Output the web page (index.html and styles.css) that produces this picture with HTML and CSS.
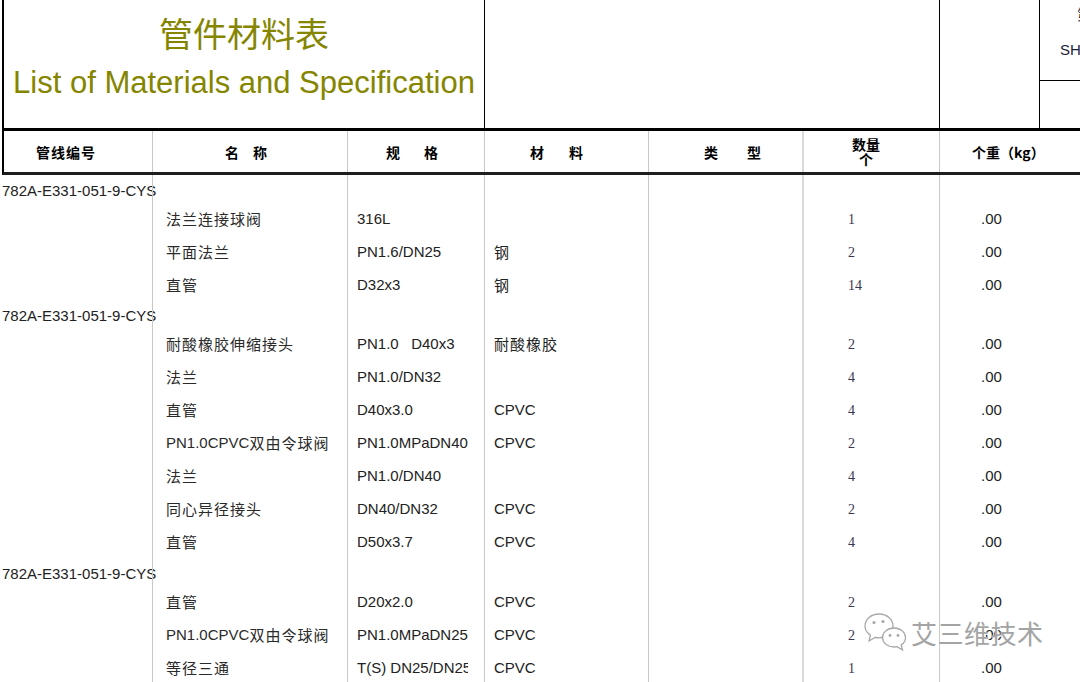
FILE: index.html
```html
<!DOCTYPE html>
<html lang="zh-CN">
<head>
<meta charset="utf-8">
<title>管件材料表</title>
<link rel="stylesheet" href="styles.css">
</head>
<body>
<div class="sheet">
  <div class="top">
    <div class="title-cell">
      <div class="title-cn">管件材料表</div>
      <div class="title-en">List of Materials and Specification</div>
    </div>
    <div class="top-cell"></div>
    <div class="top-cell"></div>
    <div class="top-cell top-right">
      <div class="tr-upper">
        <span class="tr-l1">第</span>
        <span class="tr-l2">SHEET</span>
      </div>
      <div class="tr-lower"></div>
    </div>
  </div>

  <div class="head">
    <div class="hc h1">管线编号</div>
    <div class="hc h2"><span>名</span><span>称</span></div>
    <div class="hc h3"><span>规</span><span>格</span></div>
    <div class="hc h4"><span>材</span><span>料</span></div>
    <div class="hc h5"><span>类</span><span>型</span></div>
    <div class="hc h6"><div class="stack"><span>数量</span><span>个</span></div></div>
    <div class="hc h7">个重（kg）</div>
  </div>

  <div class="rows">
    <div class="row group"><div class="c c1">782A-E331-051-9-CYS</div><div class="c"></div><div class="c"></div><div class="c"></div><div class="c"></div><div class="c c6"></div><div class="c"></div></div>
    <div class="row item"><div class="c c1"></div><div class="c c2">法兰连接球阀</div><div class="c c3">316L</div><div class="c c4"></div><div class="c"></div><div class="c c6">1</div><div class="c c7">.00</div></div>
    <div class="row item"><div class="c c1"></div><div class="c c2">平面法兰</div><div class="c c3">PN1.6/DN25</div><div class="c c4">钢</div><div class="c"></div><div class="c c6">2</div><div class="c c7">.00</div></div>
    <div class="row item"><div class="c c1"></div><div class="c c2">直管</div><div class="c c3">D32x3</div><div class="c c4">钢</div><div class="c"></div><div class="c c6">14</div><div class="c c7">.00</div></div>

    <div class="row group"><div class="c c1">782A-E331-051-9-CYS</div><div class="c"></div><div class="c"></div><div class="c"></div><div class="c"></div><div class="c c6"></div><div class="c"></div></div>
    <div class="row item"><div class="c c1"></div><div class="c c2">耐酸橡胶伸缩接头</div><div class="c c3 pre">PN1.0   D40x3</div><div class="c c4">耐酸橡胶</div><div class="c"></div><div class="c c6">2</div><div class="c c7">.00</div></div>
    <div class="row item"><div class="c c1"></div><div class="c c2">法兰</div><div class="c c3">PN1.0/DN32</div><div class="c c4"></div><div class="c"></div><div class="c c6">4</div><div class="c c7">.00</div></div>
    <div class="row item"><div class="c c1"></div><div class="c c2">直管</div><div class="c c3">D40x3.0</div><div class="c c4 lat">CPVC</div><div class="c"></div><div class="c c6">4</div><div class="c c7">.00</div></div>
    <div class="row item"><div class="c c1"></div><div class="c c2"><span class="lat">PN1.0CPVC</span>双由令球阀</div><div class="c c3">PN1.0MPaDN40</div><div class="c c4 lat">CPVC</div><div class="c"></div><div class="c c6">2</div><div class="c c7">.00</div></div>
    <div class="row item"><div class="c c1"></div><div class="c c2">法兰</div><div class="c c3">PN1.0/DN40</div><div class="c c4"></div><div class="c"></div><div class="c c6">4</div><div class="c c7">.00</div></div>
    <div class="row item"><div class="c c1"></div><div class="c c2">同心异径接头</div><div class="c c3">DN40/DN32</div><div class="c c4 lat">CPVC</div><div class="c"></div><div class="c c6">2</div><div class="c c7">.00</div></div>
    <div class="row item"><div class="c c1"></div><div class="c c2">直管</div><div class="c c3">D50x3.7</div><div class="c c4 lat">CPVC</div><div class="c"></div><div class="c c6">4</div><div class="c c7">.00</div></div>

    <div class="row group"><div class="c c1">782A-E331-051-9-CYS</div><div class="c"></div><div class="c"></div><div class="c"></div><div class="c"></div><div class="c c6"></div><div class="c"></div></div>
    <div class="row item"><div class="c c1"></div><div class="c c2">直管</div><div class="c c3">D20x2.0</div><div class="c c4 lat">CPVC</div><div class="c"></div><div class="c c6">2</div><div class="c c7">.00</div></div>
    <div class="row item"><div class="c c1"></div><div class="c c2"><span class="lat">PN1.0CPVC</span>双由令球阀</div><div class="c c3">PN1.0MPaDN25</div><div class="c c4 lat">CPVC</div><div class="c"></div><div class="c c6">2</div><div class="c c7">.00</div></div>
    <div class="row item"><div class="c c1"></div><div class="c c2">等径三通</div><div class="c c3"><span class="clip">T(S) DN25/DN25</span></div><div class="c c4 lat">CPVC</div><div class="c"></div><div class="c c6">1</div><div class="c c7">.00</div></div>
  </div>

  <div class="watermark">
    <svg class="wm-icon" width="46" height="42" viewBox="0 0 46 42">
      <path d="M16 2 C8 2 2 7.5 2 14 C2 17.8 4.2 21 7.5 23 L6 29 L12.5 25.3 C13.6 25.6 14.8 25.8 16 25.8 C24 25.8 30 20.5 30 14 C30 7.5 24 2 16 2 Z" fill="#fff" stroke="#a8a8a8" stroke-width="1.3"/>
      <circle cx="11" cy="10.5" r="1.6" fill="#a8a8a8"/>
      <circle cx="20" cy="9.5" r="1.6" fill="#a8a8a8"/>
      <path d="M31 16 C24.3 16 19.5 20.5 19.5 25.5 C19.5 30.5 24.3 35 31 35 C32 35 33 34.9 34 34.6 L39.5 37.8 L38.2 33 C40.9 31.2 42.5 28.5 42.5 25.5 C42.5 20.5 37.7 16 31 16 Z" fill="#fff" stroke="#a8a8a8" stroke-width="1.3"/>
      <circle cx="27" cy="23.5" r="1.4" fill="#a8a8a8"/>
      <circle cx="35" cy="23.5" r="1.4" fill="#a8a8a8"/>
    </svg>
    <span class="wm-text">艾三维技术</span>
  </div>
</div>
</body>
</html>
```

FILE: styles.css
```css
* {
  box-sizing: border-box;
  margin: 0;
  padding: 0;
}

html, body {
  background: #fff;
  overflow: hidden;
}

body {
  width: 1080px;
  height: 682px;
  font-family: "Liberation Sans", "Noto Sans CJK SC", sans-serif;
  font-size: 15px;
  color: #222;
}

.sheet {
  position: relative;
  width: 1080px;
  height: 682px;
  overflow: hidden;
  padding-left: 2px;
}

/* ---------- top title block ---------- */
.top {
  display: grid;
  grid-template-columns: 480px 455px 100px 100px;
  width: max-content;
  height: 128px;
  border-left: 2px solid #000;
}

.title-cell {
  display: flex;
  flex-direction: column;
  align-items: center;
  padding-top: 16px;
}

.title-cn {
  font-family: "Noto Sans CJK SC", sans-serif;
  font-size: 34px;
  line-height: 34px;
  color: #858500;
}

.title-en {
  font-family: "Liberation Sans", sans-serif;
  font-size: 31px;
  line-height: 31px;
  margin-top: 17px;
  color: #858500;
  white-space: nowrap;
}

.top-cell {
  border-left: 1px solid #000;
}

.top-right {
  display: grid;
  grid-template-rows: 81px 1fr;
}

.tr-upper {
  border-bottom: 1px solid #000;
  display: flex;
  flex-direction: column;
  padding-top: 6px;
  color: #1c1c3a;
}

.tr-l1 {
  font-family: "Noto Sans CJK SC", sans-serif;
  font-size: 15px;
  line-height: 16px;
  padding-left: 37px;
}

.tr-l2 {
  font-size: 15px;
  line-height: 18px;
  margin-top: 19px;
  padding-left: 20px;
}

/* ---------- header row ---------- */
.head {
  display: grid;
  grid-template-columns: 148px 195px 137px 164px 154px 137px 200px;
  width: max-content;
  height: 47px;
  border-left: 2px solid #000;
  border-top: 3px solid #000;
  border-bottom: 3px solid #1e1e1e;
}

.hc {
  display: flex;
  align-items: center;
  font-family: "Noto Sans CJK SC", sans-serif;
  font-weight: bold;
  font-size: 14px;
  color: #000;
  white-space: nowrap;
}

.hc + .hc {
  border-left: 1px solid #c8c8c8;
}

.h1 { padding-left: 32px; letter-spacing: 1px; }
.h2 { padding-left: 72px; gap: 14px; }
.h3 { padding-left: 38px; gap: 24px; }
.h4 { padding-left: 45px; gap: 25px; }
.h5 { padding-left: 55px; gap: 29px; }
.hc.h6 { padding-left: 48px; border-left: 2px solid #dadada; }
.h7 { padding-left: 32px; }

.stack {
  display: flex;
  flex-direction: column;
  align-items: center;
  line-height: 15px;
  padding-top: 1px;
}

/* ---------- body rows ---------- */
.row {
  display: grid;
  grid-template-columns: 150px 195px 137px 164px 154px 137px 200px;
  width: max-content;
}

.row.group { height: 26.5px; }
.row.item { height: 33px; }

.c {
  display: flex;
  align-items: center;
  white-space: nowrap;
  font-size: 15px;
  color: #222;
}

.c + .c {
  border-left: 1px solid #c8c8c8;
}

.row.group .c1 {
  padding-top: 4px;
}

.c2 {
  padding-left: 13px;
  letter-spacing: 1px;
  color: #2a2a2a;
}

.c2 .lat {
  letter-spacing: 0;
}

.c3 { padding-left: 9px; }
.c3.pre { white-space: pre; }

.c4 {
  padding-left: 9px;
  letter-spacing: 1px;
}

.c4.lat { letter-spacing: 0; }

.c.c6 {
  border-left: 2px solid #dadada;
  padding-left: 44px;
  padding-top: 3px;
  font-family: "Liberation Serif", serif;
  font-size: 14px;
  color: #3b3650;
}

.c7 { padding-left: 41px; }

.clip {
  display: inline-block;
  max-width: 111px;
  overflow: hidden;
  white-space: nowrap;
}

/* ---------- watermark ---------- */
.watermark {
  position: absolute;
  left: 863px;
  top: 612px;
  display: flex;
  align-items: center;
  gap: 2px;
}

.wm-text {
  font-family: "Noto Sans CJK SC", sans-serif;
  font-size: 26px;
  line-height: 30px;
  color: #a4a4a4;
  text-shadow: 0 0 1px #fff, 1px 1px 0 #fff;
  letter-spacing: 0.5px;
}
```
